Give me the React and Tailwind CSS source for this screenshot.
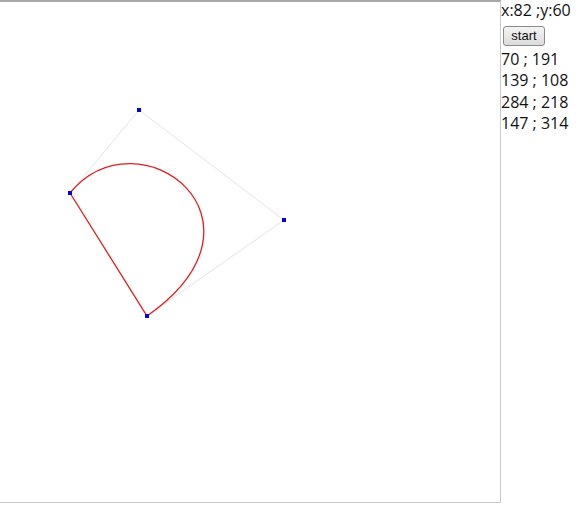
import React from "react";

const pts = [
  [70, 191],
  [139, 108],
  [284, 218],
  [147, 314],
];

export default function App() {
  const [a, b, c, d] = pts;
  return (
    <div className="flex items-start bg-white" style={{ fontFamily: "'Open Sans', sans-serif" }}>
      <div className="w-[501px] h-[503px] shrink-0 border-t-2 border-t-[#a8a8a8] border-r border-r-[#c9c9c9] border-b border-b-[#c9c9c9]">
        <svg width="500" height="500" viewBox="0 0 500 500" className="block">
          <polyline
            points={pts.map((p) => p.join(",")).join(" ")}
            fill="none"
            stroke="#e4e4e4"
            strokeWidth="1"
          />
          <path
            d={`M${a[0]} ${a[1]} C${b[0]} ${b[1]} ${c[0]} ${c[1]} ${d[0]} ${d[1]} L${a[0]} ${a[1]}`}
            fill="none"
            stroke="#e41c1c"
            strokeWidth="1.3"
          />
          {pts.map(([x, y], i) => (
            <rect key={i} x={x - 2} y={y - 2} width="4" height="4" fill="#0000e0" />
          ))}
        </svg>
      </div>
      <div className="flex flex-col text-[16px] leading-[21.5px] text-[#111]">
        <div>x:82 ;y:60</div>
        <div className="pl-[2px] mt-[4px] mb-[3px]">
          <button className="h-[20px] w-[42px] rounded-[3px] border border-[#8a8a8a] bg-gradient-to-b from-[#f4f4f4] to-[#dcdcdc] text-[13px] leading-[16px] text-[#111] flex items-center justify-center" style={{ fontFamily: "'Liberation Sans', Arial, sans-serif" }}>
            start
          </button>
        </div>
        <div>70 ; 191</div>
        <div>139 ; 108</div>
        <div>284 ; 218</div>
        <div>147 ; 314</div>
      </div>
    </div>
  );
}
